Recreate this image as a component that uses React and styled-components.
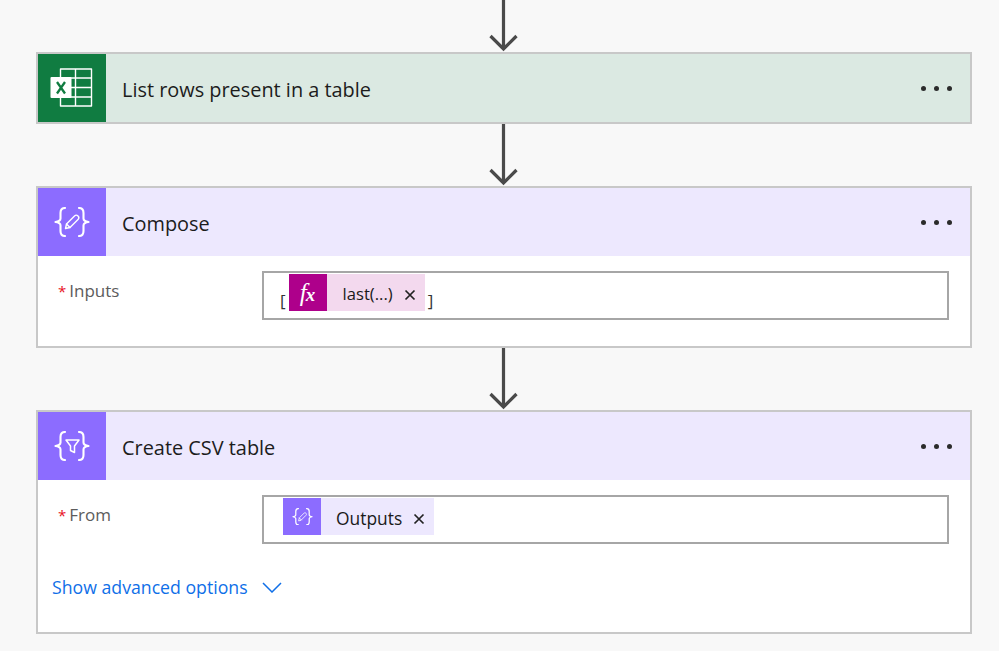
import React from 'react';
import styled, { createGlobalStyle } from 'styled-components';

const GlobalStyle = createGlobalStyle`
html, body {
  margin: 0;
  padding: 0;
  background: #f8f8f8;
  font-family: "Open Sans", "Noto Sans", sans-serif;
  overflow: hidden;
}
`

const Page = styled.div`
width: 999px;
height: 651px;
overflow: hidden;
padding: 0 27px 0 36px;
box-sizing: border-box;
display: flex;
flex-direction: column;
`

const Connector = styled.div`
height: ${(props) => props.height}px;
flex: none;
display: flex;
justify-content: center;
color: #4a4a4a;
`

const Card = styled.section`
flex: none;
background: #fff;
border: 2px solid #c8c8c8;
box-sizing: border-box;
height: ${(props) => props.height}px;
`

const Header = styled.header`
height: 68px;
display: flex;
align-items: center;
background: ${(props) => props.tint};
`

const IconBox = styled.div`
width: 68px;
height: 68px;
flex: none;
background: ${(props) => props.color};
display: flex;
align-items: center;
justify-content: center;
`

const Title = styled.h2`
margin: 0 0 0 16px;
flex: 1;
font-size: 19.9px;
font-weight: 400;
color: #1c1c1c;
position: relative;
top: 1px;
`

const Dots = styled.div`
display: flex;
gap: 8px;
margin-right: 18px;
`

const Dot = styled.span`
width: 5px;
height: 5px;
border-radius: 50%;
background: #2b2b2b;
`

const Body = styled.div`
padding: 15px 21px 0 20px;
`

const Field = styled.div`
display: flex;
align-items: flex-start;
`

const Label = styled.label`
width: 204px;
flex: none;
font-size: 17px;
color: #5c5c5c;
line-height: 24px;
padding-top: 8px;
`

const Star = styled.span`
color: #e81123;
margin-right: 3px;
font-size: 15px;
`

const InputBox = styled.div`
flex: 1;
height: 49px;
box-sizing: border-box;
border: 2px solid #a6a6a6;
background: #fff;
display: flex;
align-items: flex-start;
padding: 1px 0 0 ${(props) => props.inset}px;
`

const Bracket = styled.span`
font-size: 17px;
color: #333;
line-height: 22px;
margin-top: 16px;
`

const Token = styled.div`
display: flex;
align-items: center;
height: 37px;
background: ${(props) => props.tint};
margin: 0 ${(props) => (props.inBrackets ? 3 : 0)}px;
`

const TokenIcon = styled.div`
width: 38px;
height: 37px;
flex: none;
background: ${(props) => props.color};
display: flex;
align-items: center;
justify-content: center;
`

const Fx = styled.span`
font-family: "Liberation Serif", serif;
font-style: italic;
font-size: 25px;
color: #fff;
line-height: 1;
`

const FxTail = styled.span`
font-size: 19px;
font-weight: 700;
margin-left: -1px;
`

const TokenText = styled.span`
font-size: ${(props) => props.size}px;
color: #1a1a1a;
margin-left: ${(props) => props.gap}px;
margin-right: 11px;
position: relative;
top: 1px;
`

const Close = styled.svg`
width: 12px;
height: 12px;
margin-right: 9px;
color: #222;
position: relative;
top: 2px;
`

const Advanced = styled.div`
display: flex;
align-items: center;
margin-top: 31px;
margin-left: -6px;
color: #0f6fe8;
font-size: 17.7px;
`

const Chevron = styled.svg`
width: 20px;
height: 11px;
margin-left: 14px;
color: #0f6fe8;
`

const DownArrow = ({ height }) => (
  <svg width="30" height={height} viewBox={`0 0 30 ${height}`} fill="none" stroke="currentColor" strokeWidth="3.200">
    <path d={`M14.500 0V${height - 3}M1.500 ${height - 16}L14.500 ${height - 3}L27.500 ${height - 16}`} />
  </svg>
)

const ExcelIcon = () => (
  <svg width="44" height="40" viewBox="0 0 44 40" fill="none">
    <path d="M10.500 1H41.500V38H10.500Z" stroke="#fff" strokeWidth="1.400" strokeLinejoin="round" />
    <path d="M25.500 1V38M10.500 10H41.500M10.500 19.500H41.500M10.500 29H41.500" stroke="#fff" strokeWidth="1.400" />
    <rect x="0.500" y="9" width="21" height="21" rx="1" fill="#fff" />
    <path d="M7 14L15 25.500M15 14L7 25.500" stroke="#107c41" strokeWidth="2.300" />
  </svg>
)

const Braces = ({ width, children }) => (
  <svg width={width} height={(width * 30) / 36} viewBox="0 0 36 30" fill="none" stroke="#fff" strokeWidth="2.100" strokeLinecap="round" strokeLinejoin="round">
    <path d="M11 1C7.500 1 6.500 3 6.500 6V11.500C6.500 13.500 5 14.500 1.500 15C5 15.500 6.500 16.500 6.500 18.500V24C6.500 27 7.500 29 11 29" />
    <path d="M25 1C28.500 1 29.500 3 29.500 6V11.500C29.500 13.500 31 14.500 34.500 15C31 15.500 29.500 16.500 29.500 18.500V24C29.500 27 28.500 29 25 29" />
    {children}
  </svg>
)

const PenMark = () => (
  <g strokeWidth="1.400">
    <path d="M11.500 21.500L12.500 17L20.500 9C21.500 8 23 8 24 9C25 10 25 11.500 24 12.500L16 20.500Z" />
    <path d="M12.500 17L16 20.500" />
  </g>
)

const FunnelMark = () => (
  <path d="M12 9H25L20.500 15V21.500L16.500 19.500V15Z" strokeWidth="1.500" />
)

const CloseIcon = () => (
  <Close viewBox="0 0 12 12" fill="none" stroke="currentColor" strokeWidth="1.700">
    <path d="M1.500 1.500L10.500 10.500M10.500 1.500L1.500 10.500" />
  </Close>
)

const CardHeader = ({ tint, color, title, children }) => (
  <Header tint={tint}>
    <IconBox color={color}>{children}</IconBox>
    <Title>{title}</Title>
    <Dots><Dot /><Dot /><Dot /></Dots>
  </Header>
)

const purple = '#8c6cff'
const lilac = '#ede8fe'

export default function App() {
  return (
    <>
      <GlobalStyle />
      <Page>
        <Connector height={52}><DownArrow height={52} /></Connector>
        <Card height={72}>
          <CardHeader tint="#dbe9e2" color="#107c41" title="List rows present in a table">
            <ExcelIcon />
          </CardHeader>
        </Card>
        <Connector height={62}><DownArrow height={62} /></Connector>
        <Card height={162}>
          <CardHeader tint={lilac} color={purple} title="Compose">
            <Braces width={36}><PenMark /></Braces>
          </CardHeader>
          <Body>
            <Field>
              <Label><Star>*</Star>Inputs</Label>
              <InputBox inset={16}>
                <Bracket>[</Bracket>
                <Token tint="#f3d9ee" inBrackets>
                  <TokenIcon color="#ae008b"><Fx>f<FxTail>x</FxTail></Fx></TokenIcon>
                  <TokenText gap={16} size={16.6}>last(...)</TokenText>
                  <CloseIcon />
                </Token>
                <Bracket>]</Bracket>
              </InputBox>
            </Field>
          </Body>
        </Card>
        <Connector height={62}><DownArrow height={62} /></Connector>
        <Card height={224}>
          <CardHeader tint={lilac} color={purple} title="Create CSV table">
            <Braces width={36}><FunnelMark /></Braces>
          </CardHeader>
          <Body>
            <Field>
              <Label><Star>*</Star>From</Label>
              <InputBox inset={19}>
                <Token tint={lilac}>
                  <TokenIcon color={purple}>
                    <Braces width={21}><PenMark /></Braces>
                  </TokenIcon>
                  <TokenText gap={15} size={17.4}>Outputs</TokenText>
                  <CloseIcon />
                </Token>
              </InputBox>
            </Field>
            <Advanced>
              Show advanced options
              <Chevron viewBox="0 0 20 11" fill="none" stroke="currentColor" strokeWidth="1.500">
                <path d="M1 1L10 10L19 1" />
              </Chevron>
            </Advanced>
          </Body>
        </Card>
      </Page>
    </>
  )
}
